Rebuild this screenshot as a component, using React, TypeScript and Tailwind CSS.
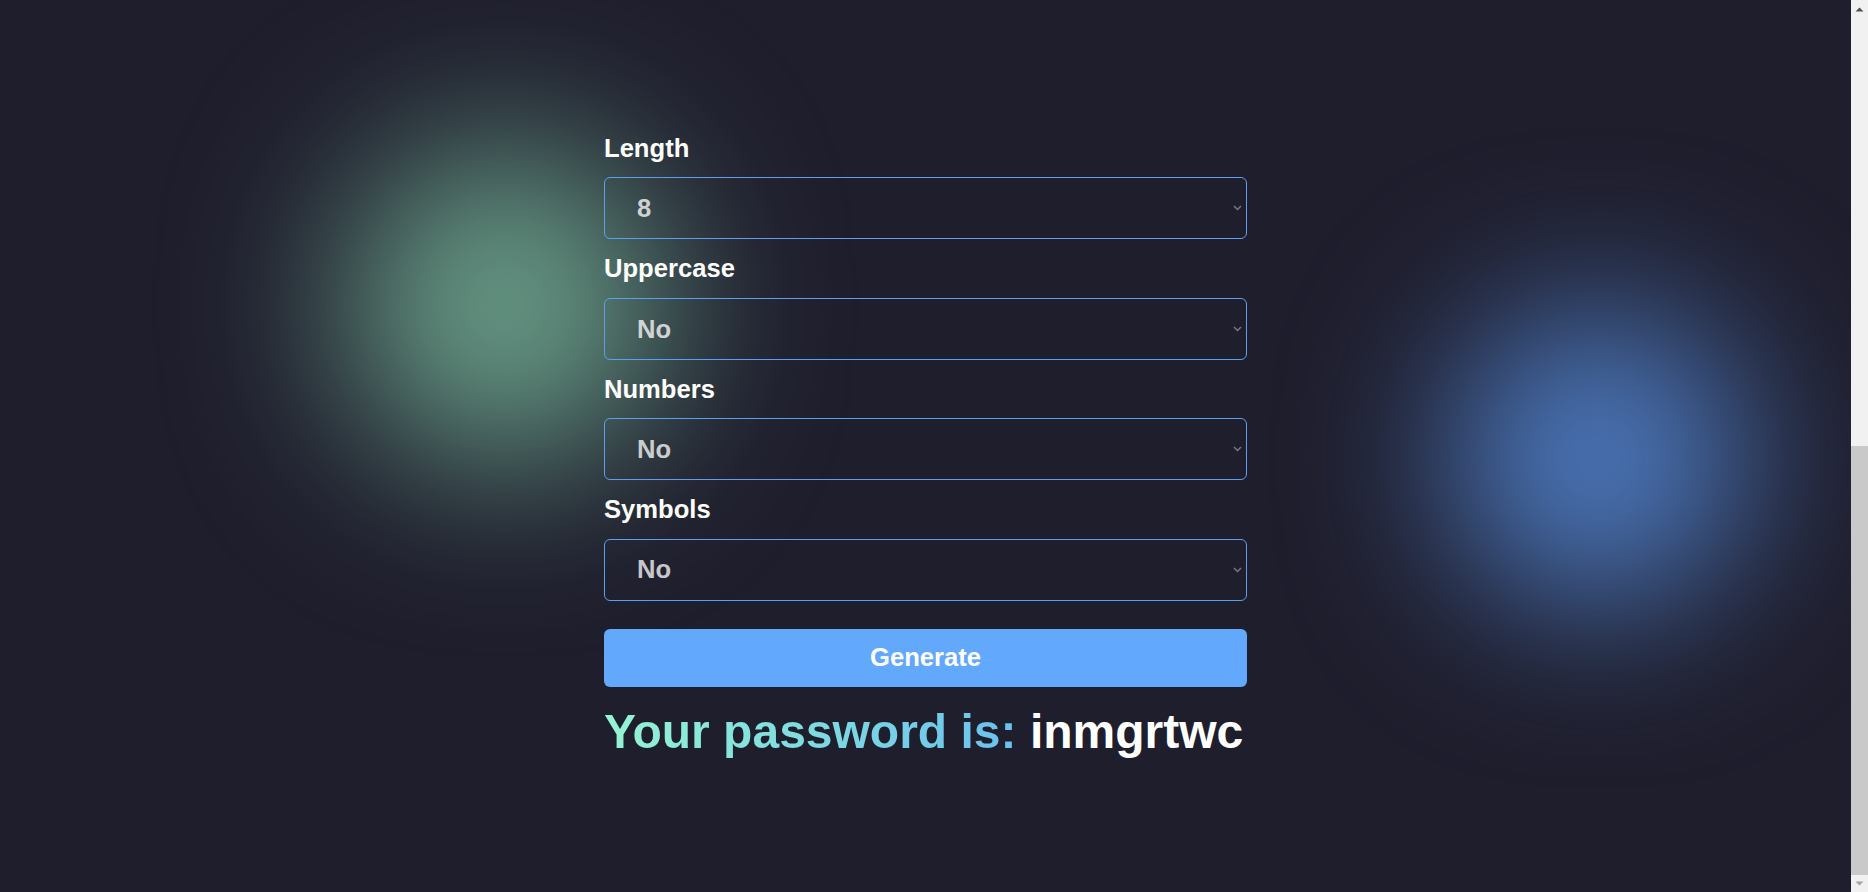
import React, { useState } from 'react';

type Field = {
  id: string;
  label: string;
  options: string[];
};

const fields: Field[] = [
  { id: 'length', label: 'Length', options: ['8', '10', '12', '16', '20', '24', '32'] },
  { id: 'uppercase', label: 'Uppercase', options: ['No', 'Yes'] },
  { id: 'numbers', label: 'Numbers', options: ['No', 'Yes'] },
  { id: 'symbols', label: 'Symbols', options: ['No', 'Yes'] },
];

const makePassword = (opts: Record<string, string>) => {
  let chars = 'abcdefghijklmnopqrstuvwxyz';
  if (opts.uppercase === 'Yes') chars += 'ABCDEFGHIJKLMNOPQRSTUVWXYZ';
  if (opts.numbers === 'Yes') chars += '0123456789';
  if (opts.symbols === 'Yes') chars += '!@#$%^&*()_+-=';
  let out = '';
  for (let i = 0; i < Number(opts.length); i++) {
    out += chars[Math.floor(Math.random() * chars.length)];
  }
  return out;
};

// classic window scrollbar, scrolled to the bottom
const Scrollbar = () => (
  <div className="flex h-full w-[17px] shrink-0 flex-col bg-[#f1f1f1]">
    <div className="flex h-[17px] items-center justify-center">
      <svg width="9" height="6" viewBox="0 0 9 6">
        <path d="M0.5 5.5L4.5 1.5L8.5 5.5Z" fill="#505050" />
      </svg>
    </div>
    <div className="flex flex-1 flex-col">
      <div className="mt-auto h-[429px] bg-[#c9c9c9]" />
    </div>
    <div className="flex h-[17px] items-center justify-center">
      <svg width="9" height="6" viewBox="0 0 9 6">
        <path d="M0.5 0.5L4.5 4.5L8.5 0.5Z" fill="#a3a3a3" />
      </svg>
    </div>
  </div>
);

export default function App() {
  const [values, setValues] = useState<Record<string, string>>({
    length: '8',
    uppercase: 'No',
    numbers: 'No',
    symbols: 'No',
  });
  const [password, setPassword] = useState('inmgrtwc');

  return (
    <div className="flex h-screen overflow-hidden bg-[#1f1e2d] font-['Liberation_Sans',Arial,sans-serif] text-white">
      <main className="relative flex-1 overflow-hidden">
        {/* background glows */}
        <div className="absolute left-[345px] top-[145px] h-[320px] w-[320px] rounded-full bg-[#6a9f89] blur-[85px]" />
        <div className="absolute left-[1448px] top-[308px] h-[300px] w-[300px] rounded-full bg-[#4c79be] blur-[80px]" />

        <div className="relative mx-auto w-[643px] pt-[134px]">
          {fields.map((f, i) => (
            <div key={f.id} className={i > 0 ? 'mt-[15px]' : ''}>
              <label htmlFor={f.id} className="mb-[14px] block text-[25.6px] font-bold leading-[1.15] text-white">
                {f.label}
              </label>
              <div className="relative">
                <select
                  id={f.id}
                  value={values[f.id]}
                  onChange={e => setValues({ ...values, [f.id]: e.target.value })}
                  className="block h-[62px] w-full appearance-none rounded-md border border-[#5a9ff0] bg-transparent pl-[32px] text-[25.6px] font-bold text-white/75 outline-none">
                  {f.options.map(o => (
                    <option key={o} value={o} className="bg-[#1f1e2d]">
                      {o}
                    </option>
                  ))}
                </select>
                <svg
                  className="pointer-events-none absolute right-[5px] top-1/2 -translate-y-1/2"
                  width="9"
                  height="6"
                  viewBox="0 0 9 6"
                  fill="none">
                  <path d="M1 1l3.5 3.5L8 1" stroke="#77777f" strokeWidth="1.5" />
                </svg>
              </div>
            </div>
          ))}

          <button
            onClick={() => setPassword(makePassword(values))}
            className="mt-7 block h-[58px] w-full rounded-md bg-[#62a8fd] text-[25.6px] font-bold text-white">
            Generate
          </button>

          <p className="mt-[21px] whitespace-nowrap text-5xl font-bold leading-none">
            <span className="bg-linear-to-r from-[#95f4d2] to-[#6bc0ee] bg-clip-text text-transparent">
              Your password is:
            </span>{' '}
            {password}
          </p>
        </div>
      </main>
      <Scrollbar />
    </div>
  );
}
